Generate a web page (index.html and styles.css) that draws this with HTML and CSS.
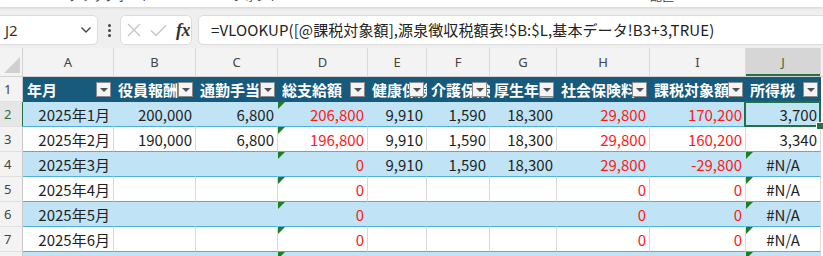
FILE: index.html
```html
<!DOCTYPE html>
<html lang="ja">
<head>
<meta charset="utf-8">
<link rel="stylesheet" href="styles.css">
</head>
<body>
<div class="app">
  <div class="ribbon">
    <span class="rl rl1">クリップボード</span>
    <span class="rl rl2">フォント</span>
    <span class="rl rl3">配置</span>
    <span class="rl rl4">数値</span>
  </div>
  <div class="fbar">
    <div class="namebox">
      <span class="ref">J2</span>
      <svg class="chev" width="12" height="8" viewBox="0 0 12 8"><polyline points="1.5,1.5 6,6 10.5,1.5" fill="none" stroke="#444" stroke-width="1.4"/></svg>
    </div>
    <div class="dots"><i></i><i></i><i></i></div>
    <div class="fxbox">
      <svg width="14" height="14" viewBox="0 0 14 14"><path d="M1 1 L13 13 M13 1 L1 13" stroke="#c4c4c4" stroke-width="1.3" fill="none"/></svg>
      <svg width="17" height="13" viewBox="0 0 17 13"><polyline points="1,6.5 6,11.5 16,1.5" stroke="#c4c4c4" stroke-width="1.3" fill="none"/></svg>
      <span class="fx">fx</span>
    </div>
    <div class="formula">=VLOOKUP([@課税対象額],源泉徴収税額表!$B:$L,基本データ!B3+3,TRUE)</div>
  </div>
  <div class="sheet">
    <div class="corner"><span class="tri"></span></div>
    <div class="ch">A</div><div class="ch">B</div><div class="ch">C</div><div class="ch">D</div><div class="ch">E</div><div class="ch">F</div><div class="ch">G</div><div class="ch">H</div><div class="ch">I</div><div class="ch chsel">J</div><div class="ch chk"></div>

    <div class="rh">1</div>
    <div class="hd"><span>年月</span><i class="dd"></i></div>
    <div class="hd"><span>役員報酬</span><i class="dd"></i></div>
    <div class="hd"><span>通勤手当</span><i class="dd"></i></div>
    <div class="hd"><span>総支給額</span><i class="dd"></i></div>
    <div class="hd"><span>健康保険</span><i class="dd"></i></div>
    <div class="hd"><span>介護保険</span><i class="dd"></i></div>
    <div class="hd"><span>厚生年金</span><i class="dd"></i></div>
    <div class="hd"><span>社会保険料</span><i class="dd"></i></div>
    <div class="hd"><span>課税対象額</span><i class="dd"></i></div>
    <div class="hd"><span>所得税</span><i class="dd"></i></div>
    <div class="k"></div>

    <div class="rh rhsel">2</div>
    <div class="c band num">2025年1月</div>
    <div class="c band num">200,000</div>
    <div class="c band num">6,800</div>
    <div class="c band num red err">206,800</div>
    <div class="c band num">9,910</div>
    <div class="c band num">1,590</div>
    <div class="c band num">18,300</div>
    <div class="c band num red">29,800</div>
    <div class="c band num red">170,200</div>
    <div class="c band num sel">3,700<span class="handle"></span></div>
    <div class="k"></div>

    <div class="rh">3</div>
    <div class="c num">2025年2月</div>
    <div class="c num">190,000</div>
    <div class="c num">6,800</div>
    <div class="c num red err">196,800</div>
    <div class="c num">9,910</div>
    <div class="c num">1,590</div>
    <div class="c num">18,300</div>
    <div class="c num red">29,800</div>
    <div class="c num red">160,200</div>
    <div class="c num">3,340</div>
    <div class="k"></div>

    <div class="rh">4</div>
    <div class="c band num">2025年3月</div>
    <div class="c band"></div>
    <div class="c band"></div>
    <div class="c band num red err">0</div>
    <div class="c band num">9,910</div>
    <div class="c band num">1,590</div>
    <div class="c band num">18,300</div>
    <div class="c band num red">29,800</div>
    <div class="c band num red">-29,800</div>
    <div class="c band ctr err">#N/A</div>
    <div class="k"></div>

    <div class="rh">5</div>
    <div class="c num">2025年4月</div>
    <div class="c"></div>
    <div class="c"></div>
    <div class="c num red err">0</div>
    <div class="c"></div>
    <div class="c"></div>
    <div class="c"></div>
    <div class="c num red">0</div>
    <div class="c num red">0</div>
    <div class="c ctr err">#N/A</div>
    <div class="k"></div>

    <div class="rh">6</div>
    <div class="c band num">2025年5月</div>
    <div class="c band"></div>
    <div class="c band"></div>
    <div class="c band num red err">0</div>
    <div class="c band"></div>
    <div class="c band"></div>
    <div class="c band"></div>
    <div class="c band num red">0</div>
    <div class="c band num red">0</div>
    <div class="c band ctr err">#N/A</div>
    <div class="k"></div>

    <div class="rh">7</div>
    <div class="c num">2025年6月</div>
    <div class="c"></div>
    <div class="c"></div>
    <div class="c num red err">0</div>
    <div class="c"></div>
    <div class="c"></div>
    <div class="c"></div>
    <div class="c num red">0</div>
    <div class="c num red">0</div>
    <div class="c ctr err">#N/A</div>
    <div class="k"></div>

    <div class="rh">8</div>
    <div class="c band num">2025年7月</div>
    <div class="c band"></div>
    <div class="c band"></div>
    <div class="c band num red err">0</div>
    <div class="c band"></div>
    <div class="c band"></div>
    <div class="c band"></div>
    <div class="c band num red">0</div>
    <div class="c band num red">0</div>
    <div class="c band ctr err">#N/A</div>
    <div class="k"></div>
  </div>
</div>
</body>
</html>
```
FILE: styles.css
```css
html, body {
  margin: 0;
  padding: 0;
  width: 823px;
  height: 256px;
  overflow: hidden;
  background: #ffffff;
}
.app {
  font-family: "Noto Sans CJK JP", "Noto Sans", sans-serif;
  color: #222;
}
.ribbon {
  height: 7px;
  background: #fff;
  overflow: hidden;
  position: relative;
  box-shadow: 0 1px 3px rgba(0,0,0,0.12);
  display: flex;
  z-index: 1;
}
.rl {
  font-size: 12px;
  line-height: 12px;
  margin-top: -10px;
  color: #444;
  white-space: nowrap;
}
.rl1 { margin-left: 68px; }
.rl2 { margin-left: 80px; }
.rl3 { margin-left: 370px; }
.rl4 { margin-left: 150px; }

.fbar {
  height: 41px;
  box-sizing: border-box;
  padding: 8px 0 3px;
  background: #efefef;
  display: flex;
  align-items: stretch;
}
.namebox {
  margin-left: -4px;
  width: 102px;
  box-sizing: border-box;
  background: #fff;
  border: 1px solid #dcdcdc;
  border-radius: 5px;
  display: flex;
  align-items: center;
  padding: 0 5px 0 8px;
}
.ref {
  font-size: 15px;
  color: #333;
  flex: 1;
  font-family: "Noto Sans", sans-serif;
}
.dots {
  width: 22px;
  display: flex;
  flex-direction: column;
  align-items: center;
  justify-content: center;
  gap: 2px;
}
.dots i {
  width: 3px;
  height: 3px;
  border-radius: 50%;
  background: #444;
}
.fxbox {
  width: 72px;
  box-sizing: border-box;
  background: #fff;
  border: 1px solid #dcdcdc;
  border-radius: 5px;
  display: flex;
  align-items: center;
  padding: 0 0 0 6px;
  gap: 9px;
}
.fx {
  font-family: "Liberation Serif", serif;
  font-style: italic;
  font-weight: bold;
  font-size: 18px;
  color: #333;
  letter-spacing: -0.5px;
}
.formula {
  margin-left: 6px;
  flex: 1;
  margin-right: -8px;
  background: #fff;
  border: 1px solid #dcdcdc;
  border-radius: 5px;
  padding: 0 0 0 12px;
  font-size: 15px;
  letter-spacing: 0.1px;
  line-height: 28px;
  color: #222;
  white-space: nowrap;
  overflow: hidden;
}

.sheet {
  display: grid;
  grid-template-columns: 23px 91px 82px 82px 90px 59px 63px 67px 93px 96px 75px 2px;
  grid-template-rows: 29px repeat(8, 25px);
  font-size: 15px;
}
.sheet > div {
  box-sizing: border-box;
  min-width: 0;
}
.corner {
  background: #f3f3f3;
  border-right: 1px solid #d2d2d2;
  border-bottom: 1px solid #d2d2d2;
  position: relative;
}
.tri {
  position: absolute;
  right: 2px;
  bottom: 3px;
  width: 0;
  height: 0;
  border-bottom: 16px solid #d0d0d0;
  border-left: 16px solid transparent;
}
.ch {
  background: #f3f3f3;
  border-right: 1px solid #dadada;
  border-bottom: 1px solid #d2d2d2;
  font-family: "Noto Sans", sans-serif;
  font-size: 13px;
  color: #444;
  display: flex;
  align-items: center;
  justify-content: center;
}
.chsel {
  background: #d6d6d6;
  color: #217346;
  box-shadow: inset 0 -2px 0 #217346;
}
.chk { border-right: none; }
.rh {
  background: #f3f3f3;
  border-right: 1px solid #c8c8c8;
  border-bottom: 1px solid #e0e0e0;
  font-family: "Noto Sans", sans-serif;
  font-size: 13px;
  color: #444;
  display: flex;
  align-items: center;
  padding-left: 4px;
}
.rhsel {
  color: #217346;
  border-right-color: #217346;
  background: #e6e6e6;
}
.hd {
  background: #175a7c;
  color: #fff;
  font-weight: 700;
  position: relative;
  overflow: hidden;
  white-space: nowrap;
  display: flex;
  align-items: center;
  padding-left: 4px;
}
.dd {
  position: absolute;
  right: 3px;
  top: 5px;
  width: 15px;
  height: 15px;
  box-sizing: border-box;
  border: 1px solid #8c8c8c;
  background: #f4f4f4;
  display: flex;
  align-items: center;
  justify-content: center;
}
.dd::after {
  content: "";
  width: 0;
  height: 0;
  border-left: 4px solid transparent;
  border-right: 4px solid transparent;
  border-top: 4px solid #505050;
  margin-top: 1px;
}
.k { background: #fff; }
.c {
  background: #fff;
  border-right: 1px solid #d9d9d9;
  border-bottom: 1px solid #4fb0e0;
  color: #1f1f1f;
  display: flex;
  align-items: center;
  padding: 0 3px;
  white-space: nowrap;
  position: relative;
}
.band {
  background: #c0e4f5;
  border-right-color: transparent;
}
.num { justify-content: flex-end; }
.ctr { justify-content: center; }
.red { color: #ff1a1a; }
.err::before {
  content: "";
  position: absolute;
  left: 0;
  top: 0;
  width: 0;
  height: 0;
  border-top: 7px solid #1e7d1e;
  border-right: 7px solid transparent;
}
.sel { z-index: 2; }
.sel::after {
  content: "";
  position: absolute;
  left: -2px;
  top: -1px;
  right: -1px;
  bottom: -1px;
  border: 2px solid #217346;
}
.handle {
  position: absolute;
  right: -4px;
  bottom: -4px;
  width: 6px;
  height: 6px;
  background: #217346;
  border: 1px solid #fff;
  z-index: 3;
}
```
